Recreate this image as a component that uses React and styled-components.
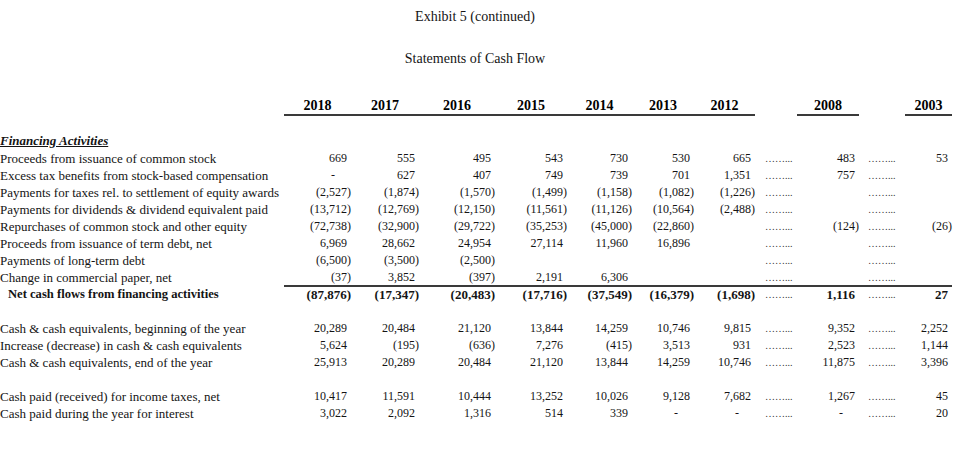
import React from "react";
import styled, { createGlobalStyle } from "styled-components";

const GlobalStyle = createGlobalStyle`
  body {
    margin: 0;
    background: #ffffff;
    font-family: "Liberation Serif", "Times New Roman", serif;
    color: #141414;
  }
`;

// label, 2018 .. 2012, leader, 2008, leader, 2003
const COLS = "284px 67px 68px 76px 72px 65px 62px 61px 42px 62px 46px 47px";
const RULE = "#3a3a3a";

const Page = styled.div`
  width: 971px;
  height: 450px;
  overflow: hidden;
`;

const Title = styled.div`
  width: 950px;
  margin-top: ${(p) => p.$top}px;
  text-align: center;
  font-size: 14px;
  line-height: 17px;
`;

const HeadRow = styled.div`
  display: grid;
  grid-template-columns: ${COLS};
  margin-top: 31px;
  margin-bottom: 16px;
`;

const Year = styled.div`
  text-align: center;
  font-size: 14px;
  font-weight: bold;
  line-height: 16px;
  color: #000;
  border-bottom: 2px solid ${(p) => (p.$lined ? RULE : "transparent")};
`;

const Row = styled.div`
  display: grid;
  grid-template-columns: ${COLS};
  height: 17px;
  line-height: 17px;
  white-space: nowrap;
`;

const Section = styled.div`
  font-size: 13px;
  font-weight: bold;
  font-style: italic;
  text-decoration: underline;
`;

const Label = styled.div`
  font-size: ${(p) => (p.$total ? "12.6px" : "13px")};
  font-weight: ${(p) => (p.$total ? "bold" : "normal")};
  padding-left: ${(p) => (p.$total ? 8 : 0)}px;
  border-top: 2px solid transparent;
  line-height: 15px;
`;

const Num = styled.div`
  text-align: right;
  font-size: ${(p) => (p.$total ? 13 : 12)}px;
  font-weight: ${(p) => (p.$total ? "bold" : "normal")};
  padding-right: ${(p) => p.$pad}px;
  border-top: 2px solid ${(p) => (p.$total ? RULE : "transparent")};
  line-height: 15px;
`;

const Leader = styled.div`
  font-size: 10px;
  color: #333;
  padding-left: ${(p) => p.$indent}px;
  border-top: 2px solid ${(p) => (p.$total ? RULE : "transparent")};
  line-height: 15px;
`;

const Blank = styled.div`
  height: 17px;
`;

const years = ["2018", "2017", "2016", "2015", "2014", "2013", "2012"];

const financing = [
  ["Proceeds from issuance of common stock", ["669", "555", "495", "543", "730", "530", "665"], "483", "53"],
  ["Excess tax benefits from stock-based compensation", ["-", "627", "407", "749", "739", "701", "1,351"], "757", ""],
  ["Payments for taxes rel. to settlement of equity awards", ["(2,527)", "(1,874)", "(1,570)", "(1,499)", "(1,158)", "(1,082)", "(1,226)"], "", ""],
  ["Payments for dividends & dividend equivalent paid", ["(13,712)", "(12,769)", "(12,150)", "(11,561)", "(11,126)", "(10,564)", "(2,488)"], "", ""],
  ["Repurchases of common stock and other equity", ["(72,738)", "(32,900)", "(29,722)", "(35,253)", "(45,000)", "(22,860)", ""], "(124)", "(26)"],
  ["Proceeds from issuance of term debt, net", ["6,969", "28,662", "24,954", "27,114", "11,960", "16,896", ""], "", ""],
  ["Payments of long-term debt", ["(6,500)", "(3,500)", "(2,500)", "", "", "", ""], "", ""],
  ["Change in commercial paper, net", ["(37)", "3,852", "(397)", "2,191", "6,306", "", ""], "", ""],
];

const total = ["Net cash flows from financing activities", ["(87,876)", "(17,347)", "(20,483)", "(17,716)", "(37,549)", "(16,379)", "(1,698)"], "1,116", "27"];

const cash = [
  ["Cash & cash equivalents, beginning of the year", ["20,289", "20,484", "21,120", "13,844", "14,259", "10,746", "9,815"], "9,352", "2,252"],
  ["Increase (decrease) in cash & cash equivalents", ["5,624", "(195)", "(636)", "7,276", "(415)", "3,513", "931"], "2,523", "1,144"],
  ["Cash & cash equivalents, end of the year", ["25,913", "20,289", "20,484", "21,120", "13,844", "14,259", "10,746"], "11,875", "3,396"],
];

const paid = [
  ["Cash paid (received) for income taxes, net", ["10,417", "11,591", "10,444", "13,252", "10,026", "9,128", "7,682"], "1,267", "45"],
  ["Cash paid during the year for interest", ["3,022", "2,092", "1,316", "514", "339", "-", "-"], "-", "20"],
];

const padFor = (v) => (v.startsWith("(") ? 0 : v === "-" ? 16 : 4);

const Value = ({ v, isTotal }) => (
  <Num $pad={padFor(v)} $total={isTotal}>
    {v}
  </Num>
);

const DOTS = "\u2026\u2026...";

const DataRow = ({ row, isTotal }) => {
  const [label, recent, y2008, y2003] = row;
  return (
    <Row>
      <Label $total={isTotal}>{label}</Label>
      {recent.map((v, i) => (
        <Value key={i} v={v} isTotal={isTotal} />
      ))}
      <Leader $indent={10} $total={isTotal}>{DOTS}</Leader>
      <Value v={y2008} isTotal={isTotal} />
      <Leader $indent={9} $total={isTotal}>{DOTS}</Leader>
      <Value v={y2003} isTotal={isTotal} />
    </Row>
  );
};

export default function App() {
  return (
    <Page>
      <GlobalStyle />
      <Title $top={8}>Exhibit 5 (continued)</Title>
      <Title $top={25}>Statements of Cash Flow</Title>

      <HeadRow>
        <div />
        {years.map((y) => (
          <Year key={y} $lined>
            {y}
          </Year>
        ))}
        <Year />
        <Year $lined>2008</Year>
        <Year />
        <Year $lined>2003</Year>
      </HeadRow>

      <Row>
        <Section>Financing Activities</Section>
      </Row>
      {financing.map((r) => (
        <DataRow key={r[0]} row={r} />
      ))}
      <DataRow row={total} isTotal />

      <Blank />
      {cash.map((r) => (
        <DataRow key={r[0]} row={r} />
      ))}

      <Blank />
      {paid.map((r) => (
        <DataRow key={r[0]} row={r} />
      ))}
    </Page>
  );
}
